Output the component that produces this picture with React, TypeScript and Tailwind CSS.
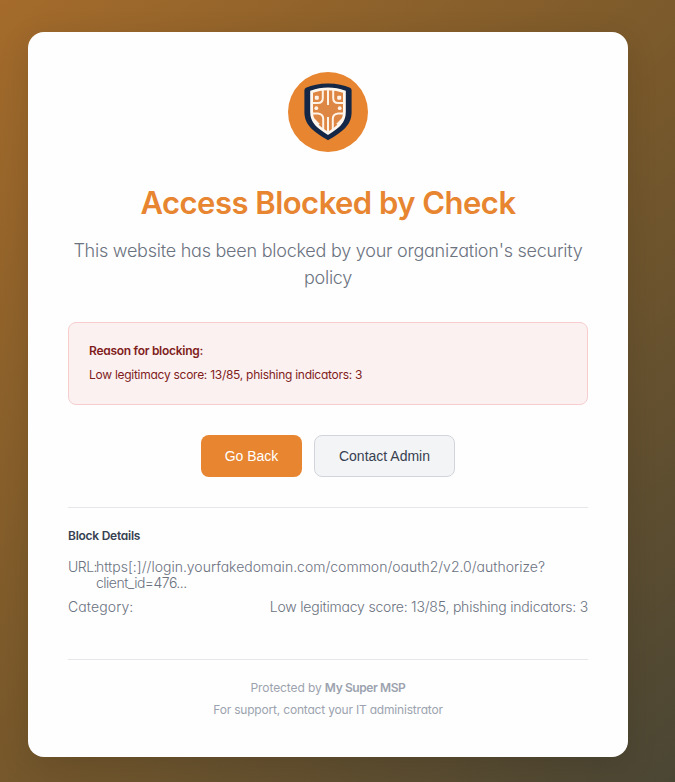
import React from "react";

function ShieldLogo() {
  return (
    <svg className="size-20 shrink-0" viewBox="0 0 80 80" fill="none">
      <circle cx="40" cy="40" r="40" fill="#e78530" />
      <path d="M40 11.6C49 11.6 56 13.5 62 15.8Q63.6 16.5 63.6 18.5V40C63.6 54 53 60.5 40 68.3 27 60.5 16.4 54 16.4 40V18.5Q16.4 16.5 18 15.8C24 13.5 31 11.6 40 11.6Z" fill="#142746" />
      <path d="M40 16.8C46.5 16.8 51.5 17.8 56.4 19.8V40C56.4 50.5 49.5 55.5 40 61.3 30.5 55.5 23.6 50.5 23.6 40V19.8C28.5 17.8 33.5 16.8 40 16.8Z" fill="#de8643" stroke="#fff8f0" strokeWidth="2.8" />
      <g stroke="#fff3e8" strokeWidth="2">
        <path d="M40 17V33M40 45V61" />
        <path d="M34.8 18V26Q34.8 31 29.8 31H24M45.2 18V26Q45.2 31 50.2 31H56" />
        <path d="M24 41.5H30Q35.2 42 35.2 47V57M56 41.5H50Q44.8 42 44.8 47V57" />
        <path d="M25 46.5 31 52.5M55 46.5 49 52.5" />
      </g>
      <g fill="#fff3e8">
        <rect x="26.8" y="23.8" width="4" height="4" rx="1" />
        <rect x="49.2" y="23.8" width="4" height="4" rx="1" />
        <circle cx="28.3" cy="36.2" r="1.9" />
        <circle cx="51.7" cy="36.2" r="1.9" />
      </g>
    </svg>
  );
}

export default function App() {
  return (
    <main className="h-[782px] w-[675px] overflow-hidden bg-[linear-gradient(135deg,#a46b2b_0%,#79592b_50%,#4a4634_100%)] pt-8 pl-7 font-['Inter','Liberation_Sans',sans-serif] [font-feature-settings:'cv11']">
      <section className="h-[725px] w-[600px] rounded-2xl bg-[#fefefe] p-10 shadow-[0_8px_32px_rgba(0,0,0,0.12)]">
        <header className="flex flex-col items-center text-center">
          <ShieldLogo />
          <h1 className="mt-8 h-[38px] text-[31px] leading-[38px] font-semibold tracking-[-0.52px] whitespace-nowrap text-[#e78530]">Access Blocked by Check</h1>
          <p className="mt-[15px] mb-px text-lg leading-[27px] font-light tracking-[-0.24px] whitespace-nowrap text-[#6b7280]">
            This website has been blocked by your organization's security
            <br />
            policy
          </p>
        </header>
        <div className="mt-[30px] h-[83px] rounded-lg border border-[#f7cdce] bg-[#fcf1f1] px-5 pt-[19px] text-xs text-[#7f1d1d]">
          <p className="leading-[18px] font-semibold tracking-[-0.28px]">Reason for blocking:</p>
          <p className="mt-1.5 leading-[18px] tracking-[-0.27px]">Low legitimacy score: 13/85, phishing indicators: 3</p>
        </div>
        <div className="mt-[30px] flex justify-center gap-3 font-['Liberation_Sans',sans-serif] text-sm">
          <button className="h-[42px] w-[101px] rounded-lg bg-[#e78530] text-white">Go Back</button>
          <button className="h-[42px] w-[141px] rounded-lg border border-[#d1d5db] bg-[#f3f4f6] text-[#374151]">Contact Admin</button>
        </div>
        <div className="mt-[30px] h-[152px] border-t border-[#e5e7eb] pt-[19px] text-sm leading-4 font-light text-[#6b7280]">
          <h2 className="text-xs leading-[17px] font-semibold tracking-[-0.25px] text-[#374151]">Block Details</h2>
          <div className="mt-[15px] flex whitespace-nowrap">
            <span className="w-7 shrink-0 tracking-[-0.5px]">URL:</span>
            <span>
              https[:]//login.yourfakedomain.com/common/oauth2/v2.0/authorize?
              <br />
              <span className="tracking-[-0.5px]">client_id=476...</span>
            </span>
          </div>
          <div className="mt-2 flex justify-between">
            <span className="tracking-[0.1px]">Category:</span>
            <span className="tracking-[-0.21px]">Low legitimacy score: 13/85, phishing indicators: 3</span>
          </div>
        </div>
        <footer className="border-t border-[#e5e7eb] pt-[17px] text-center text-xs leading-[22px] text-[#9ca3af]">
          <p className="tracking-[-0.1px]">Protected by <strong className="font-semibold tracking-[-0.4px]">My Super MSP</strong></p>
          <p className="tracking-[-0.19px]">For support, contact your IT administrator</p>
        </footer>
      </section>
    </main>
  );
}
